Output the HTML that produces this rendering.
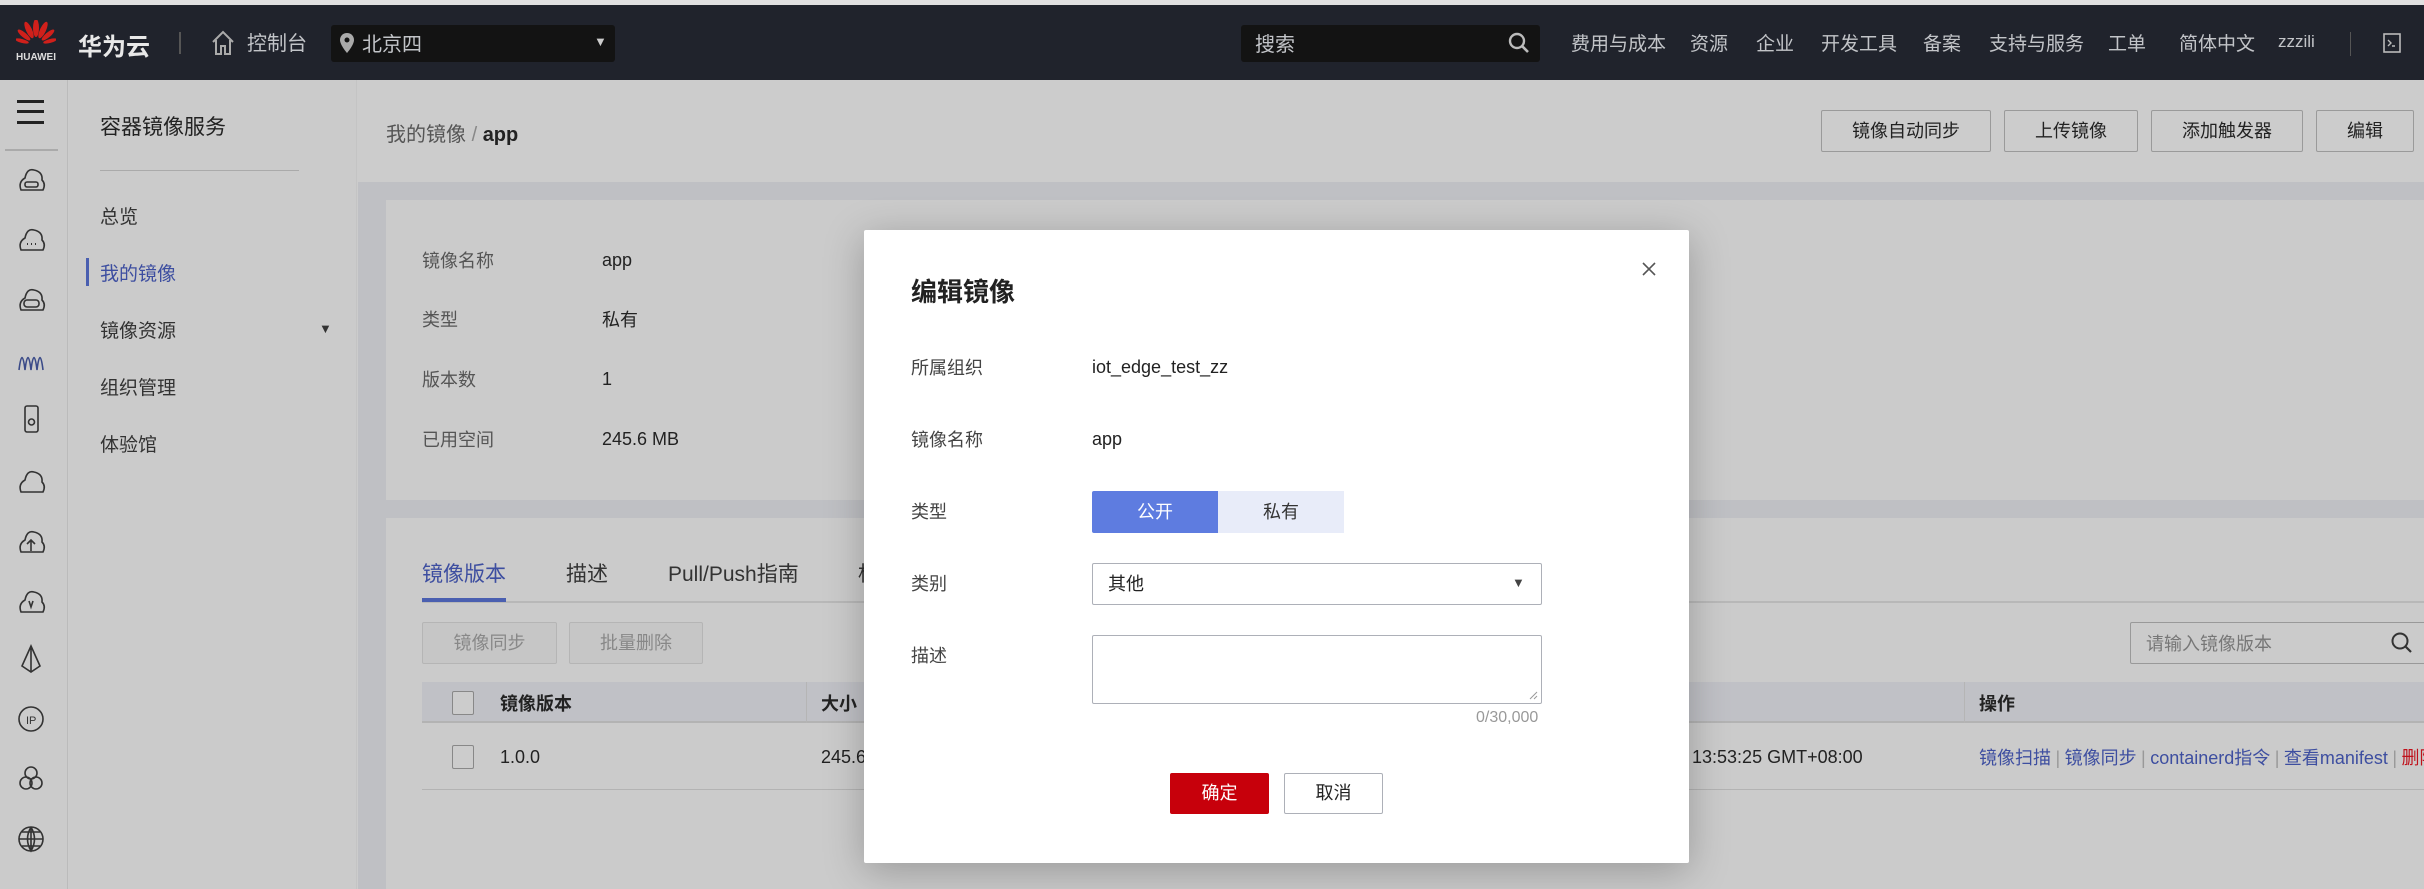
<!DOCTYPE html>
<html><head><meta charset="utf-8">
<style>
*{margin:0;padding:0;box-sizing:border-box}
body{width:2424px;height:889px;overflow:hidden;background:#ccc;font-family:"Liberation Sans","Noto Sans CJK SC",sans-serif;position:relative;color:#222}
.a{position:absolute;white-space:nowrap}
.hd{left:0;top:5px;width:2424px;height:75px;background:#20232c}
.hn{color:#c2c4c8;font-size:19px;top:29px}
.btn{position:absolute;border:1px solid #9a9a9a;border-radius:2px;background:#ccc;font-size:18px;text-align:center;color:#222}
.nav{font-size:19px;color:#333;left:100px}
.lab{font-size:18px;color:#555;left:422px}
.val{font-size:18px;color:#222;left:602px}
.ml{font-size:18px;color:#444;left:911px}
.lk{color:#3d4ea0;font-size:18px}
.sep{color:#999;font-size:18px}
</style></head><body>
<div class="a" style="left:0;top:0;width:2424px;height:5px;background:#e0e0e0"></div>
<div class="a hd"></div>
<svg class="a" style="left:16px;top:20px" width="40" height="30" viewBox="0 0 40 30">
<g fill="#d0201b"><ellipse cx="20" cy="8" rx="3" ry="9"/><ellipse cx="13" cy="10" rx="3" ry="9" transform="rotate(-25 13 10)"/><ellipse cx="27" cy="10" rx="3" ry="9" transform="rotate(25 27 10)"/><ellipse cx="8" cy="15" rx="2.5" ry="8" transform="rotate(-50 8 15)"/><ellipse cx="32" cy="15" rx="2.5" ry="8" transform="rotate(50 32 15)"/><ellipse cx="6" cy="21" rx="2" ry="7" transform="rotate(-75 6 21)"/><ellipse cx="34" cy="21" rx="2" ry="7" transform="rotate(75 34 21)"/></g></svg>
<div class="a" style="left:16px;top:52px;font-size:10px;color:#ddd;font-weight:bold">HUAWEI</div>
<div class="a" style="left:78px;top:27px;font-size:24px;color:#e8e8e8;font-weight:bold">华为云</div>
<div class="a" style="left:179px;top:32px;width:2px;height:22px;background:#555"></div>
<svg class="a" style="left:211px;top:30px" width="24" height="26" viewBox="0 0 24 26"><path d="M2 12 L12 2 L22 12 M5 10 V24 H10 V16 H14 V24 H19 V10" fill="none" stroke="#aaa" stroke-width="2"/></svg>
<div class="a hn" style="left:247px;top:27px;font-size:20px">控制台</div>
<div class="a" style="left:331px;top:25px;width:284px;height:37px;background:#131313;border-radius:3px"></div>
<svg class="a" style="left:340px;top:33px" width="14" height="20" viewBox="0 0 14 20"><path d="M7 0C3 0 0 3 0 7c0 5 7 13 7 13s7-8 7-13C14 3 11 0 7 0z" fill="#aaa"/><circle cx="7" cy="7" r="2.5" fill="#131313"/></svg>
<div class="a hn" style="left:362px;top:28px;font-size:20px">北京四</div>
<div class="a" style="left:594px;top:34px;font-size:13px;color:#ccc">▼</div>
<div class="a" style="left:1241px;top:25px;width:299px;height:37px;background:#131313;border-radius:3px"></div>
<div class="a hn" style="left:1255px;top:28px;font-size:20px">搜索</div>
<svg class="a" style="left:1508px;top:32px" width="22" height="22" viewBox="0 0 22 22"><circle cx="9" cy="9" r="7" fill="none" stroke="#bbb" stroke-width="2.4"/><path d="M14 14 L20 20" stroke="#bbb" stroke-width="2.6"/></svg>
<div class="a hn" style="left:1571px">费用与成本</div>
<div class="a hn" style="left:1690px">资源</div>
<div class="a hn" style="left:1756px">企业</div>
<div class="a hn" style="left:1821px">开发工具</div>
<div class="a hn" style="left:1923px">备案</div>
<div class="a hn" style="left:1989px">支持与服务</div>
<div class="a hn" style="left:2108px">工单</div>
<div class="a hn" style="left:2179px">简体中文</div>
<div class="a hn" style="left:2278px;top:32px;font-size:17px">zzzili</div>
<div class="a" style="left:2350px;top:32px;width:1px;height:24px;background:#555"></div>
<svg class="a" style="left:2383px;top:33px" width="18" height="20" viewBox="0 0 18 20"><rect x="1" y="1" width="16" height="18" fill="none" stroke="#bbb" stroke-width="1.6"/><path d="M5 7 L8 10 L5 13 M9 13 H12" stroke="#bbb" stroke-width="1.4" fill="none"/></svg>

<div class="a" style="left:0;top:80px;width:68px;height:809px;background:#cbcbcb;border-right:1px solid #bbb"></div>
<div class="a" style="left:17px;top:100px;width:27px;height:3px;background:#222"></div>
<div class="a" style="left:17px;top:110px;width:27px;height:3px;background:#222"></div>
<div class="a" style="left:17px;top:121px;width:27px;height:3px;background:#222"></div>
<div class="a" style="left:5px;top:149px;width:53px;height:2px;background:#aaa"></div>
<svg class="a" style="left:16px;top:160px" width="32" height="700" viewBox="0 0 32 700" fill="none" stroke="#333" stroke-width="1.6">
<g><path d="M5 30 Q2 22 9 18 Q11 8 18 10 Q27 12 26 20 Q30 24 27 30 Z"/><rect x="9" y="22" width="13" height="5" rx="2"/></g>
<g transform="translate(0,60)"><path d="M5 30 Q2 22 9 18 Q11 8 18 10 Q27 12 26 20 Q30 24 27 30 Z"/><path d="M11 24h1M15 24h1M19 24h1" stroke-width="2"/></g>
<g transform="translate(0,120)"><path d="M5 30 Q2 22 9 18 Q11 8 18 10 Q27 12 26 20 Q30 24 27 30 Z"/><rect x="8" y="20" width="15" height="7" rx="3"/></g>
<g transform="translate(0,180)"><path d="M3 30 Q6 5 9 30 Q12 5 15 30 Q18 5 21 30 Q24 5 27 30" stroke="#3a4a88"/></g>
<g transform="translate(0,240)"><rect x="9" y="6" width="13" height="26" rx="2"/><circle cx="15.5" cy="22" r="3"/></g>
<g transform="translate(0,300)"><path d="M5 32 Q2 24 9 20 Q11 10 18 12 Q27 14 26 22 Q30 26 27 32 Z"/></g>
<g transform="translate(0,360)"><path d="M5 32 Q2 24 9 20 Q11 10 18 12 Q27 14 26 22 Q30 26 27 32 Z"/><path d="M15 31V20M11 24l4-4 4 4"/></g>
<g transform="translate(0,420)"><path d="M5 32 Q2 24 9 20 Q11 10 18 12 Q27 14 26 22 Q30 26 27 32 Z"/><path d="M13 21l2 6 2-6"/></g>
<g transform="translate(0,480)"><path d="M15 6 L6 26 L15 32 L24 26 Z M15 6V32"/></g>
<g transform="translate(0,540)"><circle cx="15" cy="19" r="12"/><text x="10" y="24" font-size="11" fill="#333" stroke="none">IP</text></g>
<g transform="translate(0,600)"><circle cx="15" cy="13" r="6"/><circle cx="10" cy="23" r="6"/><circle cx="20" cy="23" r="6"/></g>
<g transform="translate(0,660)"><circle cx="15" cy="19" r="12"/><path d="M3 19H27M15 7V31M6 12H24M6 26H24M15 7Q8 19 15 31Q22 19 15 7"/></g>
</svg>

<div class="a" style="left:69px;top:80px;width:288px;height:809px;background:#cbcbcb;border-right:1px solid #c4c4c4"></div>
<div class="a" style="left:100px;top:111px;font-size:21px;color:#222">容器镜像服务</div>
<div class="a" style="left:100px;top:170px;width:199px;height:1px;background:#aaa"></div>
<div class="a nav" style="top:202px">总览</div>
<div class="a" style="left:86px;top:258px;width:3px;height:28px;background:#4a5fb0"></div>
<div class="a nav" style="top:259px;color:#3d4ea0">我的镜像</div>
<div class="a nav" style="top:316px">镜像资源</div>
<div class="a" style="left:319px;top:321px;font-size:13px;color:#333">▼</div>
<div class="a nav" style="top:373px">组织管理</div>
<div class="a nav" style="top:430px">体验馆</div>

<div class="a" style="left:358px;top:182px;width:2066px;height:707px;background:#bfc0c4"></div>
<div class="a" style="left:386px;top:118px;font-size:20px;color:#555">我的镜像 <span style="color:#888">/</span> <b style="color:#222">app</b></div>
<div class="btn" style="left:1821px;top:110px;width:170px;height:42px;line-height:40px">镜像自动同步</div>
<div class="btn" style="left:2004px;top:110px;width:134px;height:42px;line-height:40px">上传镜像</div>
<div class="btn" style="left:2151px;top:110px;width:152px;height:42px;line-height:40px">添加触发器</div>
<div class="btn" style="left:2316px;top:110px;width:98px;height:42px;line-height:40px">编辑</div>

<div class="a" style="left:386px;top:200px;width:2038px;height:300px;background:#cbcbcb"></div>
<div class="a lab" style="top:247px">镜像名称</div><div class="a val" style="top:250px">app</div>
<div class="a lab" style="top:306px">类型</div><div class="a val" style="top:306px">私有</div>
<div class="a lab" style="top:366px">版本数</div><div class="a val" style="top:369px">1</div>
<div class="a lab" style="top:426px">已用空间</div><div class="a val" style="top:429px">245.6 MB</div>

<div class="a" style="left:386px;top:518px;width:2038px;height:371px;background:#cbcbcb"></div>
<div class="a" style="left:422px;top:558px;font-size:21px;color:#3d4ea0">镜像版本</div>
<div class="a" style="left:566px;top:558px;font-size:21px;color:#333">描述</div>
<div class="a" style="left:668px;top:558px;font-size:21px;color:#333">Pull/Push指南</div>
<div class="a" style="left:858px;top:558px;font-size:21px;color:#333">标</div>
<div class="a" style="left:422px;top:601px;width:2002px;height:2px;background:#b8b8b8"></div>
<div class="a" style="left:422px;top:598px;width:84px;height:4px;background:#4a5fb0"></div>
<div class="btn" style="left:422px;top:622px;width:135px;height:42px;line-height:40px;color:#888;border-color:#b5b5b5;background:#c6c6c6">镜像同步</div>
<div class="btn" style="left:569px;top:622px;width:134px;height:42px;line-height:40px;color:#888;border-color:#b5b5b5;background:#c6c6c6">批量删除</div>
<div class="a" style="left:2130px;top:622px;width:300px;height:42px;border:1px solid #999;border-radius:2px"></div>
<div class="a" style="left:2146px;top:630px;font-size:18px;color:#777">请输入镜像版本</div>
<svg class="a" style="left:2390px;top:631px" width="24" height="24" viewBox="0 0 24 24"><circle cx="10" cy="10" r="7.5" fill="none" stroke="#333" stroke-width="2"/><path d="M15.5 15.5 L21 21" stroke="#333" stroke-width="2.2"/></svg>

<div class="a" style="left:422px;top:682px;width:2002px;height:41px;background:#c0c1c6;border-bottom:2px solid #b3b3b3"></div>
<div class="a" style="left:452px;top:691px;width:22px;height:24px;border:1px solid #888;border-radius:2px;background:#ccc"></div>
<div class="a" style="left:500px;top:690px;font-size:18px;font-weight:bold;color:#222">镜像版本</div>
<div class="a" style="left:806px;top:682px;width:1px;height:41px;background:#b5b5b5"></div>
<div class="a" style="left:821px;top:690px;font-size:18px;font-weight:bold;color:#222">大小</div>
<div class="a" style="left:1964px;top:682px;width:1px;height:41px;background:#b5b5b5"></div>
<div class="a" style="left:1979px;top:690px;font-size:18px;font-weight:bold;color:#222">操作</div>
<div class="a" style="left:452px;top:745px;width:22px;height:24px;border:1px solid #888;border-radius:2px;background:#ccc"></div>
<div class="a" style="left:500px;top:747px;font-size:18px;color:#222">1.0.0</div>
<div class="a" style="left:821px;top:747px;font-size:18px;color:#222">245.6 MB</div>
<div class="a" style="left:1677px;top:747px;font-size:18px;color:#222">5 13:53:25 GMT+08:00</div>
<div class="a" style="left:1979px;top:744px"><span class="lk">镜像扫描</span> <span class="sep">|</span> <span class="lk">镜像同步</span> <span class="sep">|</span> <span class="lk">containerd指令</span> <span class="sep">|</span> <span class="lk">查看manifest</span> <span class="sep">|</span> <span class="lk" style="color:#c0101a">删除</span></div>
<div class="a" style="left:422px;top:789px;width:2002px;height:1px;background:#b3b3b3"></div>

<div class="a" style="left:864px;top:230px;width:825px;height:633px;background:#fff;border-radius:2px;box-shadow:0 8px 40px rgba(0,0,0,0.25)"></div>
<div class="a" style="left:911px;top:272px;font-size:26px;font-weight:bold;color:#222">编辑镜像</div>
<svg class="a" style="left:1641px;top:261px" width="16" height="16" viewBox="0 0 16 16"><path d="M2 2L14 14M14 2L2 14" stroke="#555" stroke-width="1.6"/></svg>
<div class="a ml" style="top:354px">所属组织</div><div class="a" style="left:1092px;top:357px;font-size:18px;color:#222">iot_edge_test_zz</div>
<div class="a ml" style="top:426px">镜像名称</div><div class="a" style="left:1092px;top:429px;font-size:18px;color:#222">app</div>
<div class="a ml" style="top:498px">类型</div>
<div class="a" style="left:1092px;top:491px;width:126px;height:42px;background:#5e7ce0;color:#fff;font-size:18px;text-align:center;line-height:42px;border-radius:2px 0 0 2px">公开</div>
<div class="a" style="left:1218px;top:491px;width:126px;height:42px;background:#e8ecf9;color:#333;font-size:18px;text-align:center;line-height:42px">私有</div>
<div class="a ml" style="top:570px">类别</div>
<div class="a" style="left:1092px;top:563px;width:450px;height:42px;border:1px solid #adb0b8;border-radius:2px"></div>
<div class="a" style="left:1108px;top:570px;font-size:18px;color:#222">其他</div>
<div class="a" style="left:1512px;top:575px;font-size:13px;color:#444">▼</div>
<div class="a ml" style="top:642px">描述</div>
<div class="a" style="left:1092px;top:635px;width:450px;height:69px;border:1px solid #adb0b8;border-radius:2px"></div>
<svg class="a" style="left:1528px;top:690px" width="10" height="10" viewBox="0 0 10 10"><path d="M9 2L2 9M9 6L6 9" stroke="#999"/></svg>
<div class="a" style="left:1476px;top:709px;font-size:16px;color:#999">0/30,000</div>
<div class="a" style="left:1170px;top:773px;width:99px;height:41px;background:#c7000b;color:#fff;font-size:18px;text-align:center;line-height:41px;border-radius:2px">确定</div>
<div class="a" style="left:1284px;top:773px;width:99px;height:41px;border:1px solid #adb0b8;color:#222;font-size:18px;text-align:center;line-height:39px;border-radius:2px;background:#fff">取消</div>
</body></html>
